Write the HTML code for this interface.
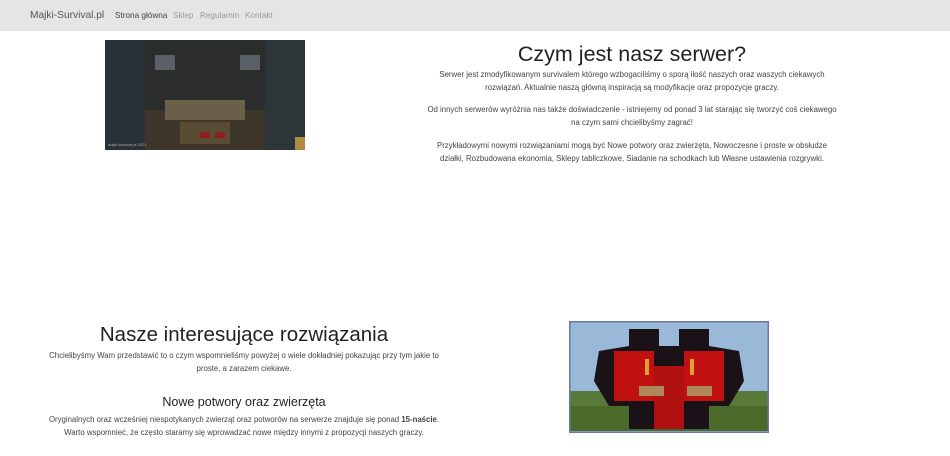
<!DOCTYPE html>
<html><head><meta charset="utf-8"><style>
*{margin:0;padding:0;box-sizing:border-box}
body{width:950px;height:456px;background:#fff;font-family:"Liberation Sans",sans-serif;color:#333;position:relative;overflow:hidden}
.nav{position:absolute;left:0;top:0;width:950px;height:31px;background:#e5e5e5}
.brand{position:absolute;left:30px;top:10px;font-size:10.2px;color:#555}
.nav a{position:absolute;top:11px;font-size:8.2px;color:#999}
.abs{position:absolute;text-align:center}
h1{font-weight:normal;color:#222}
p{font-size:7.8px;line-height:12.5px;color:#444}
</style></head><body>
<div class="nav">
<div class="brand">Majki-Survival.pl</div>
<a style="left:115px;color:#444">Strona główna</a>
<a style="left:173px">Sklep</a>
<a style="left:200px">Regulamin</a>
<a style="left:245px">Kontakt</a>
</div>
<svg style="position:absolute;left:105px;top:40px" width="200" height="110">
<rect width="200" height="110" fill="#2a2d2b"/>
<rect x="0" y="0" width="40" height="110" fill="#283238"/>
<rect x="160" y="0" width="40" height="110" fill="#2c3538"/>
<rect x="50" y="15" width="20" height="15" fill="#5a6166"/>
<rect x="135" y="15" width="20" height="15" fill="#5a6166"/>
<rect x="40" y="70" width="120" height="40" fill="#3e362a"/>
<rect x="60" y="60" width="80" height="20" fill="#6a604a"/>
<rect x="75" y="82" width="50" height="22" fill="#5a4b33"/>
<rect x="95" y="92" width="10" height="6" fill="#8a2020"/>
<rect x="110" y="92" width="10" height="6" fill="#8a2020"/>
<rect x="190" y="97" width="10" height="13" fill="#b08a40"/>
<text x="3" y="106" font-size="4" fill="#aaa" font-family="Liberation Sans">majki-survival.pl 2021</text>
</svg>
<div class="abs" style="left:412px;width:440px;top:41px">
<h1 style="font-size:21.5px;line-height:26px">Czym jest nasz serwer?</h1>
<p style="margin-top:2px">Serwer jest zmodyfikowanym survivalem którego wzbogaciliśmy o sporą ilość naszych oraz waszych ciekawych<br>rozwiązań. Aktualnie naszą główną inspiracją są modyfikacje oraz propozycje graczy.</p>
<p style="margin-top:10px">Od innych serwerów wyróżnia nas także doświadczenie - istniejemy od ponad 3 lat starając się tworzyć coś ciekawego<br>na czym sami chcielibyśmy zagrać!</p>
<p style="margin-top:11px">Przykładowymi nowymi rozwiązaniami mogą być Nowe potwory oraz zwierzęta, Nowoczesne i proste w obsłudze<br>działki, Rozbudowana ekonomia, Sklepy tabliczkowe, Siadanie na schodkach lub Własne ustawienia rozgrywki.</p>
</div>
<div class="abs" style="left:30px;width:428px;top:322px">
<h1 style="font-size:20.5px;line-height:26px">Nasze interesujące rozwiązania</h1>
<p style="margin-top:2px">Chcielibyśmy Wam przedstawić to o czym wspomnieliśmy powyżej o wiele dokładniej pokazując przy tym jakie to<br>proste, a zarazem ciekawe.</p>
<h1 style="font-size:12.5px;line-height:16px;margin-top:19px">Nowe potwory oraz zwierzęta</h1>
<p style="margin-top:4px">Oryginalnych oraz wcześniej niespotykanych zwierząt oraz potworów na serwerze znajduje się ponad <b>15-naście</b>.<br>Warto wspomnieć, że często staramy się wprowadzać nowe między innymi z propozycji naszych graczy.</p>
</div>
<svg style="position:absolute;left:569px;top:321px" width="200" height="112">
<rect width="200" height="112" fill="#6a78a8"/>
<rect x="1.5" y="1.5" width="197" height="109" fill="#9ab8d8"/>
<rect x="1.5" y="70" width="197" height="40" fill="#5a7a3a"/>
<rect x="1.5" y="85" width="197" height="25" fill="#4a6a2a"/>
<polygon points="30,30 60,25 60,8 90,8 90,25 110,25 110,8 140,8 140,25 170,30 175,60 160,85 140,85 140,108 60,108 60,85 40,85 25,60" fill="#1a1216"/>
<rect x="45" y="30" width="40" height="50" fill="#c01010"/>
<rect x="115" y="30" width="40" height="50" fill="#c01010"/>
<rect x="85" y="45" width="30" height="63" fill="#b01010"/>
<rect x="70" y="65" width="25" height="10" fill="#b08858"/>
<rect x="118" y="65" width="25" height="10" fill="#b08858"/>
<rect x="76" y="38" width="4" height="16" fill="#e0a030"/>
<rect x="121" y="38" width="4" height="16" fill="#e0a030"/>
</svg>
</body></html>
